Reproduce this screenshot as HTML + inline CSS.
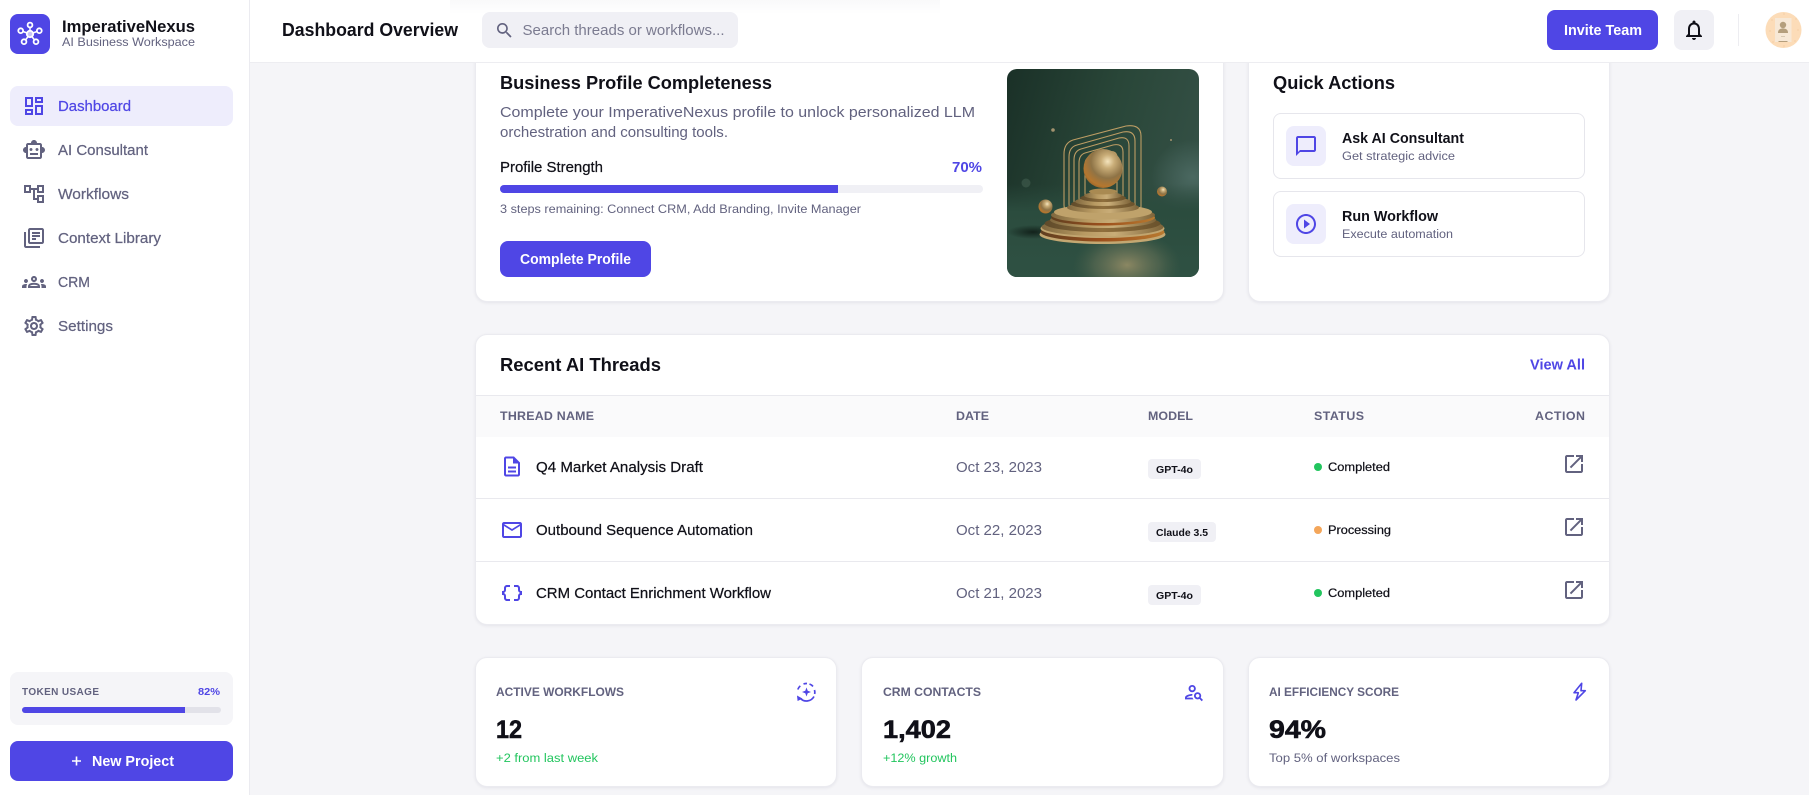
<!DOCTYPE html>
<html lang="en">
<head>
<meta charset="utf-8">
<title>ImperativeNexus Dashboard</title>
<style>
*{box-sizing:border-box;margin:0;padding:0}
html,body{width:1809px;height:795px;overflow:hidden;background:#f5f5f8;font-family:"Liberation Sans",sans-serif}
.b{position:absolute}
.card{position:absolute;background:#fff;border:1px solid #ebebf0;border-radius:12px;box-shadow:0 1px 3px rgba(20,20,50,.07)}
svg.layer{position:absolute;left:0;top:0;width:1809px;height:795px}
text{font-family:"Liberation Sans",sans-serif}
.ink{fill:#101018;stroke:#101018}.mut{fill:#62627f;stroke:#62627f}.ind{fill:#4f46e5;stroke:#4f46e5}.wht{fill:#fff;stroke:#fff}.grn{fill:#22c55e;stroke:#22c55e}
text{stroke-width:0}
text.med{stroke-width:.22px}
.w{font-weight:700}
.f10{font-size:10px}.f12{font-size:12.4px}.f14{font-size:14.4px}.f16{font-size:16.5px}.f18{font-size:18.5px}
text.f24{font-size:25px;font-weight:700;stroke-width:.6px}
</style>
</head>
<body>
<!-- main content cards -->
<div class="card" style="left:475px;top:20px;width:749px;height:282px"></div>
<div class="card" style="left:1248px;top:20px;width:362px;height:282px"></div>
<div class="b" style="left:1273px;top:113px;width:312px;height:66px;border:1px solid #e6e6ec;border-radius:8px"></div>
<div class="b" style="left:1273px;top:191px;width:312px;height:66px;border:1px solid #e6e6ec;border-radius:8px"></div>
<div class="b" style="left:1286px;top:126px;width:40px;height:40px;background:#eeedfc;border-radius:8px"></div>
<div class="b" style="left:1286px;top:204px;width:40px;height:40px;background:#eeedfc;border-radius:8px"></div>
<div class="b" style="left:500px;top:185px;width:483px;height:8px;background:#f0f0f5;border-radius:4px"></div>
<div class="b" style="left:500px;top:185px;width:338px;height:8px;background:#4f46e5;border-radius:4px 0 0 4px"></div>
<div class="b" style="left:500px;top:241px;width:151px;height:36px;background:#4f46e5;border-radius:8px"></div>

<div class="card" style="left:475px;top:334px;width:1135px;height:291px;overflow:hidden">
  <div class="b" style="left:0;top:60px;width:1133px;height:42px;background:#fafafb;border-top:1px solid #e9e9ee"></div>
  <div class="b" style="left:0;top:163px;width:1133px;height:1px;background:#e9e9ee"></div>
  <div class="b" style="left:0;top:226px;width:1133px;height:1px;background:#e9e9ee"></div>
</div>
<div class="b" style="left:1148px;top:459px;width:53px;height:20px;background:#f0f0f5;border-radius:4px"></div>
<div class="b" style="left:1148px;top:522px;width:68px;height:20px;background:#f0f0f5;border-radius:4px"></div>
<div class="b" style="left:1148px;top:585px;width:53px;height:20px;background:#f0f0f5;border-radius:4px"></div>

<div class="card" style="left:475px;top:657px;width:362px;height:130px"></div>
<div class="card" style="left:861px;top:657px;width:363px;height:130px"></div>
<div class="card" style="left:1248px;top:657px;width:362px;height:130px"></div>

<!-- top bar -->
<div class="b" style="left:250px;top:0;width:1559px;height:63px;background:#fff;border-bottom:1px solid #ededf1"></div>
<div class="b" style="left:450px;top:0;width:490px;height:14px;background:linear-gradient(#f9f9fa,#fff)"></div>
<div class="b" style="left:482px;top:12px;width:256px;height:36px;background:#f0f0f5;border-radius:8px"></div>
<div class="b" style="left:1547px;top:10px;width:111px;height:40px;background:#4f46e5;border-radius:8px"></div>
<div class="b" style="left:1674px;top:10px;width:40px;height:40px;background:#f0f0f5;border-radius:8px"></div>
<div class="b" style="left:1738px;top:14px;width:1px;height:32px;background:#ededf1"></div>

<!-- sidebar -->
<div class="b" style="left:0;top:0;width:250px;height:795px;background:#fff;border-right:1px solid #ebebf0"></div>
<div class="b" style="left:10px;top:14px;width:40px;height:40px;background:#4f46e5;border-radius:8px"></div>
<div class="b" style="left:10px;top:86px;width:223px;height:40px;background:#eeedfc;border-radius:8px"></div>
<div class="b" style="left:10px;top:672px;width:223px;height:53px;background:#f5f5f8;border-radius:8px"></div>
<div class="b" style="left:22px;top:707px;width:199px;height:6px;background:#e2e2e9;border-radius:3px"></div>
<div class="b" style="left:22px;top:707px;width:163px;height:6px;background:#4f46e5;border-radius:3px 0 0 3px"></div>
<div class="b" style="left:10px;top:741px;width:223px;height:40px;background:#4f46e5;border-radius:8px"></div>

<svg class="layer" viewBox="0 0 1809 795" xmlns="http://www.w3.org/2000/svg">
<defs>
  <path id="ext" d="M19 19H5V5h7V3H5c-1.11 0-2 .9-2 2v14c0 1.1.89 2 2 2h14c1.1 0 2-.9 2-2v-7h-2v7zM14 3v2h3.59l-9.83 9.83 1.41 1.41L19 6.41V10h2V3h-7z"/>
  <clipPath id="imgclip"><rect width="192" height="208" rx="10"/></clipPath>
  <linearGradient id="bg" x1="0" y1="0" x2="1" y2=".3"><stop offset="0" stop-color="#1a3027"/><stop offset=".55" stop-color="#294638"/><stop offset="1" stop-color="#334f44"/></linearGradient>
  <linearGradient id="floor" x1="0" y1="0" x2="0" y2="1"><stop offset="0" stop-color="#2a4a3d" stop-opacity="0"/><stop offset=".3" stop-color="#2b4c3e"/><stop offset="1" stop-color="#2f5143"/></linearGradient>
  <radialGradient id="glowR"><stop offset="0" stop-color="#4f6d66" stop-opacity=".85"/><stop offset="1" stop-color="#4f6d66" stop-opacity="0"/></radialGradient>
  <radialGradient id="glowB"><stop offset="0" stop-color="#908a64" stop-opacity=".95"/><stop offset=".6" stop-color="#6a7358" stop-opacity=".5"/><stop offset="1" stop-color="#4a6048" stop-opacity="0"/></radialGradient>
  <radialGradient id="shadow"><stop offset="0" stop-color="#0c1712" stop-opacity=".8"/><stop offset="1" stop-color="#0c1712" stop-opacity="0"/></radialGradient>
  <radialGradient id="ball" cx=".62" cy=".32" r=".78"><stop offset="0" stop-color="#f4e4bd"/><stop offset=".22" stop-color="#c9ad78"/><stop offset=".55" stop-color="#8e7346"/><stop offset=".82" stop-color="#b5772f"/><stop offset="1" stop-color="#8a5c28"/></radialGradient>
  <linearGradient id="gold" x1="0" y1="0" x2="1" y2="0"><stop offset="0" stop-color="#7f673e"/><stop offset=".35" stop-color="#b89a62"/><stop offset=".6" stop-color="#c9ad78"/><stop offset="1" stop-color="#7e6439"/></linearGradient>
  <linearGradient id="goldd" x1="0" y1="0" x2="1" y2="0"><stop offset="0" stop-color="#5f4a2a"/><stop offset=".5" stop-color="#8f6f3d"/><stop offset="1" stop-color="#6a522c"/></linearGradient>
  <linearGradient id="edge" x1="0" y1="0" x2="1" y2="0"><stop offset="0" stop-color="#5f3f20"/><stop offset=".5" stop-color="#9c4f1c"/><stop offset="1" stop-color="#b87a30"/></linearGradient>
</defs>

<!-- artwork -->
<g transform="translate(1007 69)" clip-path="url(#imgclip)">
  <rect width="192" height="208" fill="url(#bg)"/>
  <ellipse cx="186" cy="108" rx="42" ry="38" fill="url(#glowR)"/>
  <rect y="115" width="192" height="93" fill="url(#floor)"/>
  <ellipse cx="120" cy="196" rx="54" ry="34" fill="url(#glowB)"/>
  <ellipse cx="26" cy="163" rx="26" ry="7" fill="url(#shadow)"/>
  <circle cx="19" cy="114" r="4.500" fill="#4d6a5c" opacity=".45"/>
  <g fill="none" stroke="#bd9d64" stroke-width="1.100">
    <path d="M57 85q0-11 9-14l53-14q15-2 15 10v70q0 6-8 7H67q-10 0-10-8z"/>
    <path d="M62 88q0-10 8-12l46-13q12-2 12 9v64q0 5-7 6H71q-9 0-9-7z"/>
    <path d="M67 91q0-9 7-11l38-11q10-2 10 8v56q0 5-6 6H75q-8 0-8-7z"/>
    <path d="M72 94q0-8 6-10l28-8q10-2 10 7v47q0 4-6 5H80q-8 0-8-6z"/>
    <path d="M78 96q0-7 5-8l18-5q9-2 9 6v36q0 4-6 5H84q-6 0-6-6z"/>
  </g>
  <ellipse cx="95.500" cy="165.500" rx="63" ry="9.500" fill="#c4a872"/>
  <ellipse cx="95.500" cy="163" rx="62" ry="9.500" fill="url(#edge)"/>
  <ellipse cx="95.500" cy="159.500" rx="62" ry="9.500" fill="#c1a56f"/>
  <ellipse cx="95.500" cy="158" rx="61" ry="9" fill="url(#gold)"/>
  <ellipse cx="95.500" cy="154.500" rx="58" ry="8.500" fill="url(#goldd)"/>
  <ellipse cx="96" cy="151" rx="53" ry="8" fill="url(#gold)"/>
  <ellipse cx="96" cy="148.500" rx="52" ry="8" fill="url(#edge)"/>
  <ellipse cx="96" cy="146" rx="52" ry="8" fill="url(#gold)"/>
  <ellipse cx="96" cy="143" rx="49" ry="7.500" fill="#bfa26b"/>
  <ellipse cx="96" cy="138.500" rx="36" ry="5.500" fill="url(#gold)"/>
  <ellipse cx="96" cy="135" rx="32" ry="5" fill="url(#goldd)"/>
  <ellipse cx="96" cy="132.500" rx="28" ry="4.500" fill="url(#gold)"/>
  <ellipse cx="96" cy="129" rx="23" ry="4" fill="url(#goldd)"/>
  <ellipse cx="96" cy="126.500" rx="19" ry="3.500" fill="url(#gold)"/>
  <ellipse cx="96" cy="122.500" rx="14" ry="3" fill="#a98a52"/>
  <circle cx="96" cy="99.500" r="19.500" fill="url(#ball)"/>
  <circle cx="38.500" cy="137.500" r="7" fill="url(#ball)"/>
  <circle cx="155" cy="122.500" r="5" fill="url(#ball)"/>
  <circle cx="46" cy="61" r="1.800" fill="#a3936f"/>
  <circle cx="164" cy="71" r="1" fill="#a3936f"/>
</g>

<!-- logo -->
<g fill="none" stroke="#fff" stroke-width="1.500">
  <path d="M30 34V27M30 34L23 31.500M30 34L37 31.500M30 34L25.500 40M30 34L34.500 40"/>
  <circle cx="30" cy="25" r="2.400" fill="#4f46e5" stroke-width="1.800"/><circle cx="20.700" cy="30.700" r="2.400" fill="#4f46e5" stroke-width="1.800"/><circle cx="39.300" cy="30.700" r="2.400" fill="#4f46e5" stroke-width="1.800"/><circle cx="24" cy="41.700" r="2.400" fill="#4f46e5" stroke-width="1.800"/><circle cx="36" cy="41.700" r="2.400" fill="#4f46e5" stroke-width="1.800"/>
  <circle cx="30" cy="34" r="3.200" fill="#c7c3f7" stroke-width="1.800"/>
</g>

<!-- nav icons -->
<g fill="#4f46e5" transform="translate(22 94)"><path d="M19 5v2h-4V5h4M9 5v6H5V5h4m10 8v6h-4v-6h4M9 17v2H5v-2h4M21 3h-8v6h8V3zM11 3H3v10h8V3zm10 8h-8v10h8V11zm-10 4H3v6h8v-6z"/></g>
<g fill="#62627f">
  <g transform="translate(22 138)"><path d="M20 9V7c0-1.100-.9-2-2-2h-3c0-1.660-1.340-3-3-3S9 3.340 9 5H6c-1.100 0-2 .9-2 2v2c-1.660 0-3 1.340-3 3s1.340 3 3 3v4c0 1.100.9 2 2 2h12c1.100 0 2-.9 2-2v-4c1.660 0 3-1.340 3-3s-1.340-3-3-3zm-2 10H6V7h12v12zm-9-6c-.83 0-1.500-.67-1.500-1.500S8.170 10 9 10s1.500.67 1.500 1.500S9.830 13 9 13zm7.500-1.500c0 .83-.67 1.500-1.500 1.500s-1.500-.67-1.500-1.500.67-1.500 1.500-1.500 1.500.67 1.500 1.500zM8 15h8v2H8v-2z"/></g>
  <g transform="translate(22 182)"><path d="M22 11V3h-7v3H9V3H2v8h7V8h2v10h4v3h7v-8h-7v3h-2V8h2v3h7zM7 9H4V5h3v4zm10 6h3v4h-3v-4zm0-10h3v4h-3V5z"/></g>
  <g transform="translate(22 226)"><path d="M4 6H2v14c0 1.100.9 2 2 2h14v-2H4V6zm16-4H8c-1.100 0-2 .9-2 2v12c0 1.100.9 2 2 2h12c1.100 0 2-.9 2-2V4c0-1.100-.9-2-2-2zm0 14H8V4h12v12zM10 9h8v2h-8zm0 3h4v2h-4zm0-6h8v2h-8z"/></g>
  <g transform="translate(22 270)"><path d="M4 13c1.100 0 2-.9 2-2s-.9-2-2-2-2 .9-2 2 .9 2 2 2zm1.130 1.100c-.37-.06-.74-.1-1.130-.1-.99 0-1.930.21-2.780.58C.48 14.900 0 15.620 0 16.430V18h4.500v-1.610c0-.83.23-1.610.63-2.290zM20 13c1.100 0 2-.9 2-2s-.9-2-2-2-2 .9-2 2 .9 2 2 2zm4 3.430c0-.81-.48-1.530-1.220-1.850-.85-.37-1.790-.58-2.780-.58-.39 0-.76.04-1.130.1.4.68.63 1.460.63 2.290V18H24v-1.570zm-7.760-2.780c-1.170-.52-2.610-.9-4.240-.9-1.630 0-3.070.39-4.240.9C6.680 14.130 6 15.210 6 16.390V18h12v-1.610c0-1.180-.68-2.260-1.760-2.740zM8.070 16c.09-.23.13-.39.91-.69.97-.38 1.990-.56 3.020-.56s2.050.18 3.020.56c.77.3.81.46.91.69H8.070zM12 8c.55 0 1 .45 1 1s-.45 1-1 1-1-.45-1-1 .45-1 1-1m0-2c-1.660 0-3 1.340-3 3s1.340 3 3 3 3-1.340 3-3-1.340-3-3-3z"/></g>
  <g transform="translate(22 314)"><path d="M19.430 12.980c.04-.32.07-.64.07-.98 0-.34-.03-.66-.07-.98l2.110-1.650c.19-.15.24-.42.12-.64l-2-3.460c-.09-.16-.26-.25-.44-.25-.06 0-.12.01-.17.03l-2.490 1c-.52-.4-1.080-.73-1.690-.98l-.38-2.650C14.460 2.180 14.250 2 14 2h-4c-.25 0-.46.18-.49.42l-.38 2.650c-.61.25-1.170.59-1.690.98l-2.490-1c-.06-.02-.12-.03-.18-.03-.17 0-.34.09-.43.25l-2 3.460c-.13.22-.07.49.12.64l2.110 1.650c-.04.32-.07.65-.07.98 0 .33.03.66.07.98l-2.110 1.650c-.19.15-.24.42-.12.64l2 3.460c.09.16.26.25.44.25.06 0 .12-.01.17-.03l2.490-1c.52.4 1.080.73 1.690.98l.38 2.650c.03.24.24.42.49.42h4c.25 0 .46-.18.49-.42l.38-2.650c.61-.25 1.170-.59 1.690-.98l2.490 1c.06.02.12.03.18.03.17 0 .34-.09.43-.25l2-3.460c.12-.22.07-.49-.12-.64l-2.110-1.650zm-1.980-1.710c.04.31.05.52.05.73 0 .21-.02.43-.05.73l-.14 1.130.89.7 1.080.84-.7 1.210-1.270-.51-1.040-.42-.9.68c-.43.32-.84.56-1.250.73l-1.060.43-.16 1.130-.2 1.350h-1.400l-.19-1.350-.16-1.130-1.060-.43c-.43-.18-.83-.41-1.230-.71l-.91-.7-1.060.43-1.270.51-.7-1.210 1.080-.84.89-.7-.14-1.130c-.03-.31-.05-.54-.05-.74s.02-.43.05-.73l.14-1.130-.89-.7-1.080-.84.7-1.210 1.270.51 1.040.42.9-.68c.43-.32.84-.56 1.250-.73l1.060-.43.16-1.130.2-1.350h1.390l.19 1.350.16 1.130 1.060.43c.43.18.83.41 1.230.71l.91.7 1.060-.43 1.270-.51.7 1.210-1.070.85-.89.7.14 1.130zM12 8c-2.210 0-4 1.790-4 4s1.790 4 4 4 4-1.790 4-4-1.790-4-4-4zm0 6c-1.100 0-2-.9-2-2s.9-2 2-2 2 .9 2 2-.9 2-2 2z"/></g>
</g>

<!-- new project plus -->
<path d="M76.500 756.500v9M72 761h9" stroke="#fff" stroke-width="1.600" fill="none"/>

<!-- top bar icons -->
<g transform="translate(494.500 20.500) scale(.8333)" fill="#62627f"><path d="M15.500 14h-.79l-.28-.27C15.410 12.590 16 11.110 16 9.500 16 5.910 13.090 3 9.500 3S3 5.910 3 9.500 5.910 16 9.500 16c1.610 0 3.090-.59 4.230-1.570l.27.28v.79l5 4.990L20.490 19l-4.990-5zm-6 0C7.010 14 5 11.990 5 9.500S7.010 5 9.500 5 14 7.010 14 9.500 11.990 14 9.500 14z"/></g>
<g transform="translate(1682 18)" fill="#101018"><path d="M12 22c1.100 0 2-.9 2-2h-4c0 1.100.9 2 2 2zm6-6v-5c0-3.070-1.630-5.640-4.500-6.320V4c0-.83-.67-1.500-1.500-1.500s-1.500.67-1.500 1.500v.68C7.640 5.360 6 7.920 6 11v5l-2 2v1h16v-1l-2-2zm-2 1H8v-6c0-2.480 1.510-4.500 4-4.500s4 2.020 4 4.500v6z"/></g>

<!-- avatar -->
<circle cx="1783.500" cy="30" r="18" fill="#fcdcb8"/>
<rect x="1775" y="18" width="16.500" height="24" fill="#f7e8d6"/>
<circle cx="1783" cy="25" r="3.200" fill="#b49e7c"/>
<path d="M1778 33c0-3.500 2-4.500 5-4.500s5 1 5 4.500z" fill="#b49e7c"/>
<rect x="1781" y="36" width="4" height="1" fill="#d8c9b2"/>
<rect x="1778.500" y="41" width="9" height="1" fill="#b49e7c"/>
<g fill="#e8b98a"><circle cx="1772" cy="20" r=".5"/><circle cx="1770" cy="31" r=".5"/><circle cx="1773" cy="42" r=".5"/><circle cx="1796" cy="19" r=".5"/><circle cx="1798" cy="30" r=".5"/><circle cx="1795" cy="41" r=".5"/><circle cx="1784" cy="14" r=".5"/><circle cx="1784" cy="46" r=".5"/></g>

<!-- quick action icons -->
<g fill="#4f46e5">
  <g transform="translate(1294 134)"><path d="M20 2H4c-1.100 0-2 .9-2 2v18l4-4h14c1.100 0 2-.9 2-2V4c0-1.100-.9-2-2-2zm0 14H6l-2 2V4h16v12z"/></g>
  <g transform="translate(1294 212)"><path d="M10 16.500l6-4.500-6-4.500v9zM12 2C6.480 2 2 6.480 2 12s4.480 10 10 10 10-4.480 10-10S17.520 2 12 2zm0 18c-4.410 0-8-3.590-8-8s3.590-8 8-8 8 3.590 8 8-3.590 8-8 8z"/></g>
  <g transform="translate(500 454.500)"><path d="M8 16h8v2H8zm0-4h8v2H8zm6-10H6c-1.100 0-2 .9-2 2v16c0 1.100.89 2 1.990 2H18c1.100 0 2-.9 2-2V8l-6-6zm4 18H6V4h7v5h5v11z"/></g>
  <g transform="translate(500 518)"><path d="M22 6c0-1.100-.9-2-2-2H4c-1.100 0-2 .9-2 2v12c0 1.100.9 2 2 2h16c1.100 0 2-.9 2-2V6zm-2 0l-8 5-8-5h16zm0 12H4V8l8 5 8-5v10z"/></g>
  <g transform="translate(500 581)"><path d="M4 7v2c0 .55-.45 1-1 1H2v4h1c.55 0 1 .45 1 1v2c0 1.650 1.350 3 3 3h3v-2H7c-.55 0-1-.45-1-1v-2c0-1.300-.84-2.420-2-2.830v-.34C5.160 11.420 6 10.300 6 9V7c0-.55.45-1 1-1h3V4H7C5.350 4 4 5.350 4 7zM21 10c-.55 0-1-.45-1-1V7c0-1.650-1.350-3-3-3h-3v2h3c.55 0 1 .45 1 1v2c0 1.300.84 2.420 2 2.830v.34c-1.160.41-2 1.520-2 2.830v2c0 .55-.45 1-1 1h-3v2h3c1.650 0 3-1.350 3-3v-2c0-.55.45-1 1-1h1v-4h-1z"/></g>
  <!-- stat icons -->
  <path d="M806.500 687.500l1.200 3.300 3.300 1.200-3.300 1.200-1.200 3.300-1.200-3.300-3.300-1.200 3.300-1.200z"/>
  <path d="M797 695.500l.6 5.500 5-2.400z"/>
  <g transform="translate(1183.200 681.400) scale(.9)"><path d="M10 12c2.210 0 4-1.790 4-4s-1.790-4-4-4-4 1.790-4 4 1.790 4 4 4zm0-6c1.100 0 2 .9 2 2s-.9 2-2 2-2-.9-2-2 .9-2 2-2zM4 18c.22-.72 3.310-2 6-2 0-.7.13-1.370.35-1.990C7.620 13.910 2 15.270 2 18v2h9.540c-.52-.58-.93-1.250-1.190-2H4zM19.430 18.020c.36-.59.57-1.280.57-2.020 0-2.210-1.790-4-4-4s-4 1.790-4 4 1.790 4 4 4c.74 0 1.430-.22 2.020-.57L20.590 22 22 20.590c-1.500-1.500-.79-.8-2.570-2.570zM16 18c-1.100 0-2-.9-2-2s.9-2 2-2 2 .9 2 2-.9 2-2 2z"/></g>
</g>
<path d="M797.800 689.500a8.500 8.500 0 0 1 2.500-3.600M803.500 684a8.500 8.500 0 0 1 3.500-.5M809.500 684a8.500 8.500 0 0 1 3.500 2.400M814.500 690a8.500 8.500 0 0 1 .2 4M814 696.500a8.500 8.500 0 0 1-13.500 2" fill="none" stroke="#4f46e5" stroke-width="1.700"/>
<path d="M1581.700 683.300L1574 692.700h4.300L1576 700l9.300-9.300H1581z" fill="none" stroke="#4f46e5" stroke-width="1.600" stroke-linejoin="round"/>

<!-- action icons -->
<g fill="#62627f">
  <use href="#ext" x="1562" y="452"/><use href="#ext" x="1562" y="515"/><use href="#ext" x="1562" y="578"/>
</g>
<!-- status dots -->
<circle cx="1318" cy="467" r="4" fill="#22c55e"/><circle cx="1318" cy="530" r="4" fill="#f4a65a"/><circle cx="1318" cy="593" r="4" fill="#22c55e"/>

<!-- TEXT -->
<text x="62" y="32" class="f16 w ink" textLength="133" lengthAdjust="spacingAndGlyphs">ImperativeNexus</text>
<text x="62" y="46" class="f12 mut" textLength="133" lengthAdjust="spacingAndGlyphs">AI Business Workspace</text>
<text x="58" y="111" class="f14 ind med" textLength="73" lengthAdjust="spacingAndGlyphs">Dashboard</text>
<text x="58" y="155" class="f14 mut med" textLength="90" lengthAdjust="spacingAndGlyphs">AI Consultant</text>
<text x="58" y="199" class="f14 mut med" textLength="71" lengthAdjust="spacingAndGlyphs">Workflows</text>
<text x="58" y="243" class="f14 mut med" textLength="103" lengthAdjust="spacingAndGlyphs">Context Library</text>
<text x="58" y="287" class="f14 mut med" textLength="32" lengthAdjust="spacingAndGlyphs">CRM</text>
<text x="58" y="331" class="f14 mut med" textLength="55" lengthAdjust="spacingAndGlyphs">Settings</text>
<text x="22" y="695" class="f10 w mut" textLength="77" lengthAdjust="spacing">TOKEN USAGE</text>
<text x="198" y="695" class="f10 w ind" textLength="22" lengthAdjust="spacingAndGlyphs">82%</text>
<text x="92" y="766" class="f14 w wht" textLength="82" lengthAdjust="spacingAndGlyphs">New Project</text>

<text x="282" y="36" class="f18 w ink" textLength="176" lengthAdjust="spacingAndGlyphs">Dashboard Overview</text>
<text x="522.500" y="35" class="f14" fill="#7b7b90" textLength="202" lengthAdjust="spacingAndGlyphs">Search threads or workflows...</text>
<text x="1564" y="35" class="f14 w wht" textLength="78" lengthAdjust="spacingAndGlyphs">Invite Team</text>

<text x="500" y="89" class="f18 w ink" textLength="272" lengthAdjust="spacingAndGlyphs">Business Profile Completeness</text>
<text x="500" y="117" class="f14 mut" textLength="475" lengthAdjust="spacingAndGlyphs">Complete your ImperativeNexus profile to unlock personalized LLM</text>
<text x="500" y="137" class="f14 mut" textLength="228" lengthAdjust="spacingAndGlyphs">orchestration and consulting tools.</text>
<text x="500" y="172" class="f14 ink med" textLength="103" lengthAdjust="spacingAndGlyphs">Profile Strength</text>
<text x="952" y="172" class="f14 w ind" textLength="30" lengthAdjust="spacingAndGlyphs">70%</text>
<text x="500" y="213" class="f12 mut" textLength="361" lengthAdjust="spacingAndGlyphs">3 steps remaining: Connect CRM, Add Branding, Invite Manager</text>
<text x="520" y="264" class="f14 w wht" textLength="111" lengthAdjust="spacingAndGlyphs">Complete Profile</text>

<text x="1273" y="89" class="f18 w ink" textLength="122" lengthAdjust="spacingAndGlyphs">Quick Actions</text>
<text x="1342" y="143" class="f14 w ink" textLength="122" lengthAdjust="spacingAndGlyphs">Ask AI Consultant</text>
<text x="1342" y="160" class="f12 mut" textLength="113" lengthAdjust="spacingAndGlyphs">Get strategic advice</text>
<text x="1342" y="221" class="f14 w ink" textLength="96" lengthAdjust="spacingAndGlyphs">Run Workflow</text>
<text x="1342" y="238" class="f12 mut" textLength="111" lengthAdjust="spacingAndGlyphs">Execute automation</text>

<text x="500" y="371" class="f18 w ink" textLength="161" lengthAdjust="spacingAndGlyphs">Recent AI Threads</text>
<text x="1530" y="369.500" class="f14 w ind" textLength="55" lengthAdjust="spacingAndGlyphs">View All</text>
<text x="500" y="420" class="f12 w mut" textLength="94" lengthAdjust="spacing">THREAD NAME</text>
<text x="956" y="420" class="f12 w mut" textLength="33" lengthAdjust="spacing">DATE</text>
<text x="1148" y="420" class="f12 w mut" textLength="45" lengthAdjust="spacing">MODEL</text>
<text x="1314" y="420" class="f12 w mut" textLength="50" lengthAdjust="spacing">STATUS</text>
<text x="1535" y="420" class="f12 w mut" textLength="50" lengthAdjust="spacing">ACTION</text>

<text x="536" y="472" class="f14 ink med" textLength="167" lengthAdjust="spacingAndGlyphs">Q4 Market Analysis Draft</text>
<text x="536" y="535" class="f14 ink med" textLength="217" lengthAdjust="spacingAndGlyphs">Outbound Sequence Automation</text>
<text x="536" y="598" class="f14 ink med" textLength="235" lengthAdjust="spacingAndGlyphs">CRM Contact Enrichment Workflow</text>
<text x="956" y="472" class="f14 mut" textLength="86" lengthAdjust="spacingAndGlyphs">Oct 23, 2023</text>
<text x="956" y="535" class="f14 mut" textLength="86" lengthAdjust="spacingAndGlyphs">Oct 22, 2023</text>
<text x="956" y="598" class="f14 mut" textLength="86" lengthAdjust="spacingAndGlyphs">Oct 21, 2023</text>
<text x="1156" y="473" class="f10 w ink" textLength="37" lengthAdjust="spacingAndGlyphs">GPT-4o</text>
<text x="1156" y="536" class="f10 w ink" textLength="52" lengthAdjust="spacingAndGlyphs">Claude 3.5</text>
<text x="1156" y="599" class="f10 w ink" textLength="37" lengthAdjust="spacingAndGlyphs">GPT-4o</text>
<text x="1328" y="471" class="f12 ink med" textLength="62" lengthAdjust="spacingAndGlyphs">Completed</text>
<text x="1328" y="534" class="f12 ink med" textLength="63" lengthAdjust="spacingAndGlyphs">Processing</text>
<text x="1328" y="597" class="f12 ink med" textLength="62" lengthAdjust="spacingAndGlyphs">Completed</text>

<text x="496" y="696" class="f12 w mut" textLength="128" lengthAdjust="spacingAndGlyphs">ACTIVE WORKFLOWS</text>
<text x="883" y="696" class="f12 w mut" textLength="98" lengthAdjust="spacingAndGlyphs">CRM CONTACTS</text>
<text x="1269" y="696" class="f12 w mut" textLength="130" lengthAdjust="spacingAndGlyphs">AI EFFICIENCY SCORE</text>
<text x="496" y="738" class="f24 ink" textLength="26" lengthAdjust="spacingAndGlyphs">12</text>
<text x="883" y="738" class="f24 ink" textLength="68" lengthAdjust="spacingAndGlyphs">1,402</text>
<text x="1269" y="738" class="f24 ink" textLength="57" lengthAdjust="spacingAndGlyphs">94%</text>
<text x="496" y="762" class="f12 grn" textLength="102" lengthAdjust="spacingAndGlyphs">+2 from last week</text>
<text x="883" y="762" class="f12 grn" textLength="74" lengthAdjust="spacingAndGlyphs">+12% growth</text>
<text x="1269" y="762" class="f12 mut" textLength="131" lengthAdjust="spacingAndGlyphs">Top 5% of workspaces</text>
</svg>
</body>
</html>
